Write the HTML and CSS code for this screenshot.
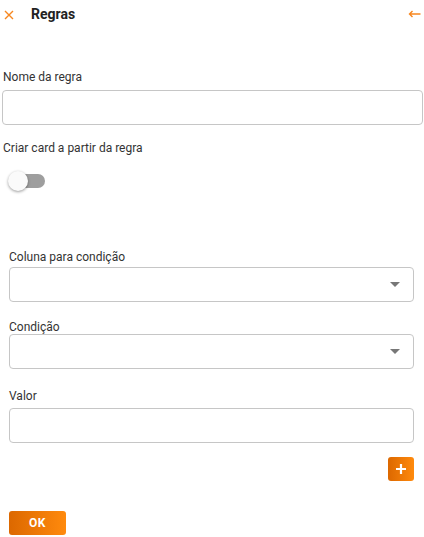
FILE: index.html
```html
<!DOCTYPE html>
<html lang="pt-BR">
<head>
  <meta charset="UTF-8">
  <meta name="viewport" content="width=device-width, initial-scale=1.0">
  <title>Regras</title>
  <link rel="stylesheet" href="styles.css">
</head>
<body>

  <div class="panel-header">
    <div class="header-left">
      <button type="button" class="icon-btn close-btn" aria-label="Fechar">
        <svg width="10" height="10" viewBox="0 0 10 10"><path d="M1 1L9 9M9 1L1 9" stroke="#f7871f" stroke-width="1.4" fill="none"/></svg>
      </button>
      <h1 class="panel-title">Regras</h1>
    </div>
    <button type="button" class="icon-btn back-btn" aria-label="Voltar">
      <svg width="13" height="8" viewBox="0 0 13 8"><path d="M12.5 4H1.5M4.5 1L1.5 4L4.5 7" stroke="#f7871f" stroke-width="1.4" fill="none"/></svg>
    </button>
  </div>

  <form id="ruleForm">
    <div class="rule-main">
      <label for="ruleName" class="field-label name-label">Nome da regra</label>
      <input type="text" id="ruleName" name="ruleName" class="text-input">

      <label class="field-label card-label">Criar card a partir da regra</label>
      <label class="switch">
        <input type="checkbox" id="createCard">
        <span class="switch-track"></span>
        <span class="switch-thumb"></span>
      </label>
    </div>

    <div class="rule-conditions">
      <label for="column" class="field-label column-label">Coluna para condição</label>
      <div class="select-wrap">
        <select id="column" name="column" class="select-input">
          <option value=""></option>
        </select>
        <span class="select-arrow"></span>
      </div>

      <label for="condition" class="field-label condition-label">Condição</label>
      <div class="select-wrap">
        <select id="condition" name="condition" class="select-input">
          <option value=""></option>
        </select>
        <span class="select-arrow"></span>
      </div>

      <label for="value" class="field-label value-label">Valor</label>
      <input type="text" id="value" name="value" class="text-input value-input">

      <div class="add-row">
        <button type="button" class="orange-btn add-btn" aria-label="Adicionar">
          <svg width="12" height="12" viewBox="0 0 12 12"><path d="M6 1V11M1 6H11" stroke="#fff" stroke-width="2.2" fill="none"/></svg>
        </button>
      </div>

      <button type="button" class="orange-btn ok-btn">OK</button>
    </div>
  </form>

</body>
</html>
```

FILE: styles.css
```css
body {
  font-family: Roboto, "Noto Sans", Arial, sans-serif;
  font-size: 12px;
  color: #333;
  background-color: #fff;
  margin: 0;
  padding: 0;
}

.panel-header {
  display: flex;
  justify-content: space-between;
  align-items: center;
  height: 28px;
  padding: 0 3px 0 4px;
}

.header-left {
  display: flex;
  align-items: center;
}

.icon-btn {
  background: none;
  border: none;
  padding: 0;
  display: flex;
  cursor: pointer;
}

.close-btn {
  margin-top: 1px;
}

.back-btn {
  margin-top: 0;
}

.panel-title {
  font-size: 14px;
  font-weight: bold;
  color: #222;
  margin: 0 0 0 17px;
  line-height: 14px;
}

.field-label {
  display: block;
  line-height: 14px;
  color: #333;
}

.text-input, .select-input {
  display: block;
  width: 100%;
  height: 35px;
  padding: 0 8px;
  border: 1px solid #c6c6c6;
  border-radius: 4px;
  background-color: #fff;
  box-sizing: border-box;
  font-family: inherit;
  font-size: 12px;
  outline: none;
}

.rule-main {
  padding: 0 1px 0 2px;
}

.name-label {
  margin: 42px 0 6px 1px;
}

.card-label {
  margin: 16px 0 16px 1px;
}

/* toggle */
.switch {
  position: relative;
  display: block;
  width: 36px;
  height: 20px;
  margin-left: 6px;
}

.switch input {
  display: none;
}

.switch-track {
  position: absolute;
  left: 3px;
  top: 3px;
  width: 34px;
  height: 14px;
  border-radius: 7px;
  background-color: #9e9e9e;
}

.switch-thumb {
  position: absolute;
  left: 0;
  top: 0;
  width: 20px;
  height: 20px;
  border-radius: 50%;
  background-color: #fafafa;
  box-shadow: 0 1px 3px rgba(0, 0, 0, 0.4);
}

.rule-conditions {
  padding: 0 10px 0 9px;
}

.column-label {
  margin: 59px 0 3px 0;
}

.condition-label {
  margin: 18px 0 0 0;
}

.value-label {
  margin: 20px 0 5px 0;
}

.select-wrap {
  position: relative;
}

.select-input {
  appearance: none;
  -webkit-appearance: none;
}

.select-arrow {
  position: absolute;
  right: 14px;
  top: 15px;
  width: 0;
  height: 0;
  border-left: 5px solid transparent;
  border-right: 5px solid transparent;
  border-top: 5px solid #777;
  pointer-events: none;
}

.add-row {
  display: flex;
  justify-content: flex-end;
  margin-top: 14px;
}

.orange-btn {
  background: linear-gradient(90deg, #dc6800, #ff8a0d);
  border: none;
  border-radius: 3px;
  color: #fff;
  cursor: pointer;
  display: flex;
  align-items: center;
  justify-content: center;
  padding: 0;
}

.add-btn {
  width: 26px;
  height: 24px;
}

.ok-btn {
  width: 57px;
  height: 24px;
  margin-top: 30px;
  font-family: inherit;
  font-size: 12px;
  font-weight: bold;
  letter-spacing: 0.5px;
}
```
